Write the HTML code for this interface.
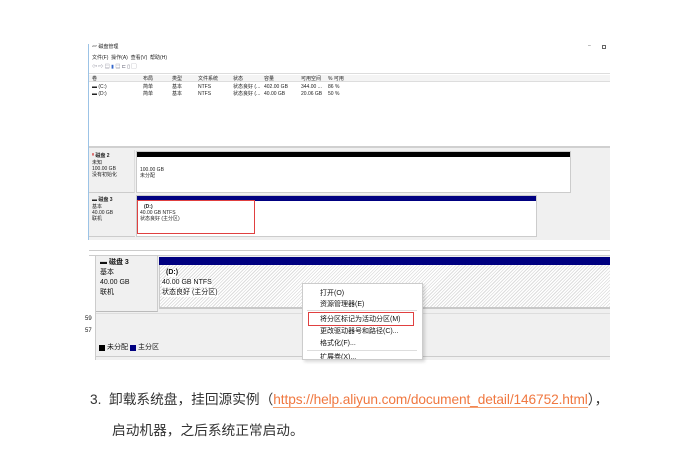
<!DOCTYPE html>
<html><head><meta charset="utf-8"><style>
*{margin:0;padding:0;box-sizing:border-box}
body{width:699px;height:473px;background:#fff;position:relative;overflow:hidden;font-family:"Liberation Sans","Noto Sans CJK SC",sans-serif;}
.a{position:absolute}
.t{position:absolute;font-size:5px;color:#222;white-space:nowrap;line-height:6px}
.m{position:absolute;font-size:7px;color:#111;white-space:nowrap;line-height:8px}
.hatch{background:repeating-linear-gradient(135deg,#fff 0 1.5px,#dcdcdc 1.5px 2.3px)}
</style></head><body>
<!-- top screenshot -->
<div class="a" style="left:88px;top:44px;width:1px;height:196px;background:#9cc3e6"></div>
<div class="t" style="left:92px;top:44px">▱ 磁盘管理</div>
<div class="t" style="left:588px;top:43px;color:#555">–</div>
<div class="a" style="left:602px;top:45px;width:4px;height:4px;border:1px solid #666"></div>
<div class="t" style="left:92px;top:55px">文件(F)&nbsp;&nbsp;操作(A)&nbsp;&nbsp;查看(V)&nbsp;&nbsp;帮助(H)</div>
<div class="t" style="left:92px;top:64px;color:#667">⇦ ⇨ ▤ <span style="color:#36c">▮</span> ▤ ⊏ ▯ ▢</div>
<div class="a" style="left:89px;top:73px;width:521px;height:1px;background:#ddd"></div>
<div class="a" style="left:89px;top:75px;width:521px;height:7px;background:#f4f4f4;border-bottom:1px solid #ddd"></div>
<div class="t" style="left:92px;top:76px">卷</div>
<div class="t" style="left:143px;top:76px">布局</div>
<div class="t" style="left:172px;top:76px">类型</div>
<div class="t" style="left:198px;top:76px">文件系统</div>
<div class="t" style="left:233px;top:76px">状态</div>
<div class="t" style="left:264px;top:76px">容量</div>
<div class="t" style="left:301px;top:76px">可用空间</div>
<div class="t" style="left:328px;top:76px">% 可用</div>
<div class="t" style="left:92px;top:84px">▬ (C:)</div><div class="t" style="left:143px;top:84px">简单</div><div class="t" style="left:172px;top:84px">基本</div><div class="t" style="left:198px;top:84px">NTFS</div><div class="t" style="left:233px;top:84px">状态良好 (...</div><div class="t" style="left:264px;top:84px">402.00 GB</div><div class="t" style="left:301px;top:84px">344.00 ...</div><div class="t" style="left:328px;top:84px">86 %</div>
<div class="t" style="left:92px;top:91px">▬ (D:)</div><div class="t" style="left:143px;top:91px">简单</div><div class="t" style="left:172px;top:91px">基本</div><div class="t" style="left:198px;top:91px">NTFS</div><div class="t" style="left:233px;top:91px">状态良好 (...</div><div class="t" style="left:264px;top:91px">40.00 GB</div><div class="t" style="left:301px;top:91px">20.06 GB</div><div class="t" style="left:328px;top:91px">50 %</div>
<div class="a" style="left:89px;top:146px;width:521px;height:2px;background:#d0d0d0"></div>
<div class="a" style="left:89px;top:148px;width:521px;height:92px;background:#f0f0f0"></div>
<div class="a" style="left:89px;top:150px;width:46px;height:43px;border-bottom:1px solid #ccc;border-right:1px solid #ddd"></div>
<div class="t" style="left:92px;top:153px;font-weight:bold"><span style="color:#c00">⁰</span> 磁盘 2</div>
<div class="t" style="left:92px;top:160px">未知</div>
<div class="t" style="left:92px;top:166px">100.00 GB</div>
<div class="t" style="left:92px;top:172px">没有初始化</div>
<div class="a" style="left:136px;top:151px;width:435px;height:42px;background:#fff;border:1px solid #ccc"></div>
<div class="a" style="left:137px;top:152px;width:433px;height:5px;background:#000"></div>
<div class="t" style="left:140px;top:167px">100.00 GB</div>
<div class="t" style="left:140px;top:173px">未分配</div>
<div class="a" style="left:89px;top:194px;width:46px;height:43px;border-bottom:1px solid #ccc"></div>
<div class="t" style="left:92px;top:197px;font-weight:bold">▬ 磁盘 3</div>
<div class="t" style="left:92px;top:204px">基本</div>
<div class="t" style="left:92px;top:210px">40.00 GB</div>
<div class="t" style="left:92px;top:216px">联机</div>
<div class="a" style="left:136px;top:195px;width:401px;height:42px;background:#fff;border:1px solid #ccc"></div>
<div class="a" style="left:137px;top:196px;width:399px;height:5px;background:#000080"></div>
<div class="a" style="left:137px;top:200px;width:118px;height:34px;border:1px solid #e04040"></div>
<div class="t" style="left:144px;top:204px;font-weight:bold">(D:)</div>
<div class="t" style="left:140px;top:210px">40.00 GB NTFS</div>
<div class="t" style="left:140px;top:216px">状态良好 (主分区)</div>

<!-- bottom screenshot -->
<div class="a" style="left:89px;top:250px;width:521px;height:110px;background:#f0f0f0"></div>
<div class="a" style="left:89px;top:250px;width:521px;height:6px;background:#fff;border-top:1px solid #ccc;border-bottom:1px solid #ccc"></div>
<div class="a" style="left:85px;top:256px;width:10px;height:104px;background:#fff"></div>
<div class="a" style="left:95px;top:256px;width:1px;height:104px;background:#ccc"></div>
<div class="m" style="left:85px;top:315px;font-size:6px">59</div>
<div class="m" style="left:85px;top:327px;font-size:6px">57</div>
<div class="a" style="left:96px;top:256px;width:62px;height:56px;background:#f0f0f0;border-right:1px solid #ccc;border-bottom:1px solid #bbb"></div>
<div class="m" style="left:100px;top:259px;font-weight:bold">▬ 磁盘 3</div>
<div class="m" style="left:100px;top:269px">基本</div>
<div class="m" style="left:100px;top:279px">40.00 GB</div>
<div class="m" style="left:100px;top:289px">联机</div>
<div class="a hatch" style="left:159px;top:257px;width:451px;height:52px;border-bottom:2px solid #c8c8c8"></div>
<div class="a" style="left:159px;top:257px;width:451px;height:8px;background:#000080"></div>
<div class="a" style="left:159px;top:265px;width:1px;height:44px;background:#ccc"></div>
<div class="m" style="left:166px;top:269px;font-weight:bold;background:#fff">(D:)</div>
<div class="m" style="left:162px;top:279px;background:#fff">40.00 GB NTFS</div>
<div class="m" style="left:162px;top:289px;background:#fff">状态良好 (主分区)</div>
<div class="a" style="left:96px;top:313px;width:514px;height:1px;background:#ddd"></div>
<div class="a" style="left:96px;top:356px;width:514px;height:1px;background:#ccc"></div>
<div class="a" style="left:99px;top:345px;width:6px;height:6px;background:#000"></div>
<div class="m" style="left:107px;top:344px">未分配</div>
<div class="a" style="left:130px;top:345px;width:6px;height:6px;background:#000080"></div>
<div class="m" style="left:138px;top:344px">主分区</div>
<!-- context menu -->
<div class="a" style="left:302px;top:283px;width:121px;height:77px;background:#fff;border:1px solid #ccc;box-shadow:2px 2px 3px rgba(0,0,0,.15);overflow:hidden">
<div class="m" style="left:17px;top:6px">打开(O)</div>
<div class="m" style="left:17px;top:17px">资源管理器(E)</div>
<div class="a" style="left:4px;top:26px;width:110px;height:1px;background:#ddd"></div>
<div class="a" style="left:5px;top:28px;width:106px;height:14px;border:1px solid #e04040"></div>
<div class="m" style="left:17px;top:32px">将分区标记为活动分区(M)</div>
<div class="m" style="left:17px;top:44px">更改驱动器号和路径(C)...</div>
<div class="m" style="left:17px;top:56px">格式化(F)...</div>
<div class="a" style="left:4px;top:66px;width:110px;height:1px;background:#ddd"></div>
<div class="m" style="left:17px;top:70px">扩展卷(X)...</div>
</div>

<!-- text -->
<div class="a" style="left:90px;top:391px;font-size:13.7px;color:#333;white-space:nowrap;line-height:18px">3.&nbsp;&nbsp;卸载系统盘，挂回源实例（<span style="color:#f07840;border-bottom:1.5px solid #f5a070;letter-spacing:-0.1px">https://help.aliyun.com/document_detail/146752.html</span>），</div>
<div class="a" style="left:112px;top:422px;font-size:13.7px;color:#333;white-space:nowrap;line-height:18px">启动机器，之后系统正常启动。</div>
</body></html>
